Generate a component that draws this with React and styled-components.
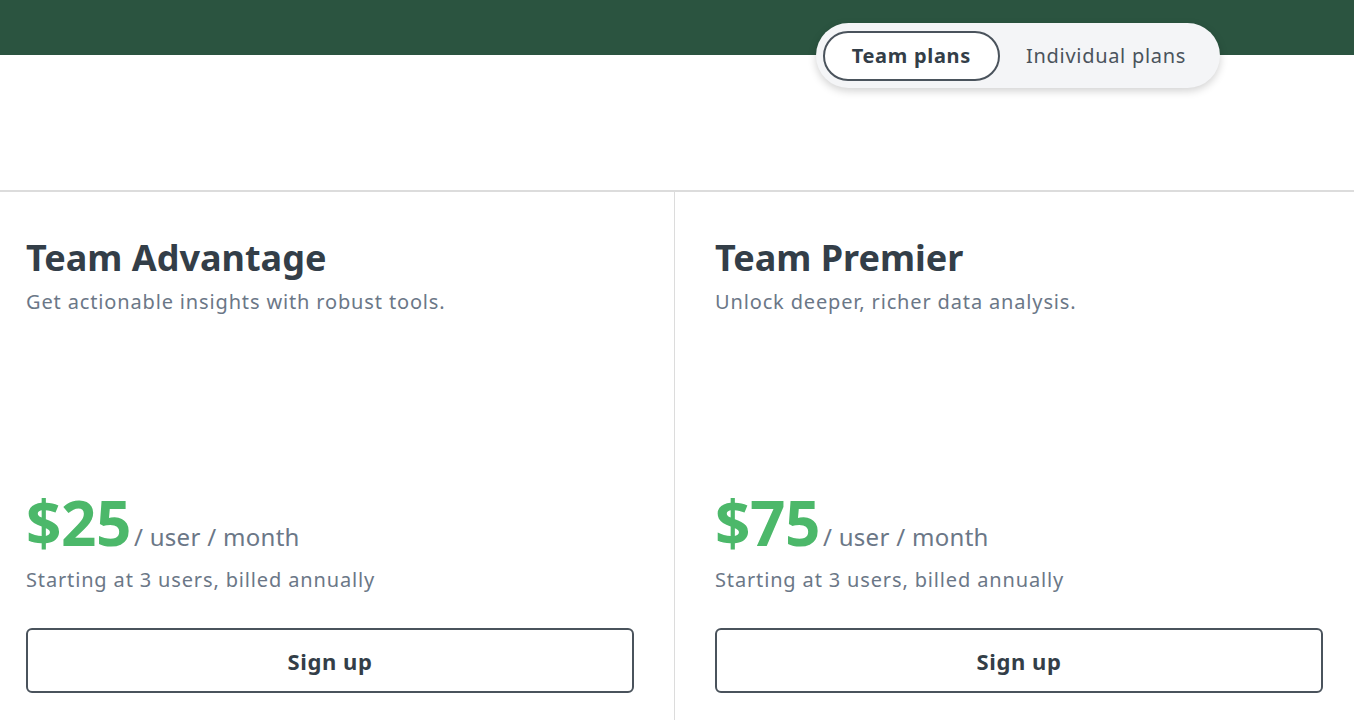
import React from 'react'
import styled, { createGlobalStyle } from 'styled-components'

const GlobalStyle = createGlobalStyle`
  html, body {
    margin: 0;
    padding: 0;
    background: #ffffff;
  }
  body {
    font-family: 'Noto Sans', 'Open Sans', Arial, sans-serif;
    color: #333e48;
    overflow: hidden;
  }
`

const plans = [
  {
    name: 'Team Advantage',
    tagline: 'Get actionable insights with robust tools.',
    price: '$25',
  },
  {
    name: 'Team Premier',
    tagline: 'Unlock deeper, richer data analysis.',
    price: '$75',
  },
]

export default function App() {
  return (
    <>
      <GlobalStyle />
      <Page>
        <Header>
          <Switcher>
            <SwitchButton active>Team plans</SwitchButton>
            <SwitchButton>Individual plans</SwitchButton>
          </Switcher>
        </Header>
        <Spacer />
        <PlanGrid>
          {plans.map((plan, i) => (
            <PlanCard key={plan.name} first={i === 0}>
              <PlanName>{plan.name}</PlanName>
              <Tagline>{plan.tagline}</Tagline>
              <PriceRow>
                <Price>{plan.price}</Price>
                <Per>/ user / month</Per>
              </PriceRow>
              <Billing>Starting at 3 users, billed annually</Billing>
              <SignUp type="button">Sign up</SignUp>
            </PlanCard>
          ))}
        </PlanGrid>
      </Page>
    </>
  )
}

const Page = styled.div`
  width: 1354px;
  height: 720px;
  overflow: hidden;
`

const Header = styled.div`
  height: 55px;
  background: #2b5440;
  display: flex;
  justify-content: flex-end;
  padding-right: 134px;
`

const Switcher = styled.div`
  margin-top: 23px;
  height: 65px;
  box-sizing: border-box;
  display: flex;
  align-items: center;
  padding: 0 8px 0 7px;
  background: #f4f5f7;
  border-radius: 33px;
  box-shadow: 0 3px 8px rgba(0, 0, 0, 0.18);
  position: relative;
  z-index: 1;
`

const SwitchButton = styled.button`
  height: 50px;
  box-sizing: border-box;
  padding: 0 ${({ active }) => (active ? '27px' : '24px')};
  border: ${({ active }) => (active ? '2px solid #4a535c' : '2px solid transparent')};
  border-radius: 25px;
  background: ${({ active }) => (active ? '#ffffff' : 'transparent')};
  font-family: inherit;
  font-size: 20px;
  letter-spacing: 0.7px;
  font-weight: ${({ active }) => (active ? 700 : 400)};
  color: ${({ active }) => (active ? '#333e48' : '#4a535c')};
  cursor: pointer;
`

const Spacer = styled.div`
  height: 135px;
`

const PlanGrid = styled.div`
  display: grid;
  grid-template-columns: 674px 1fr;
  border-top: 2px solid #dcdcdc;
  height: 530px;
`

const PlanCard = styled.div`
  display: flex;
  flex-direction: column;
  padding: 44px ${({ first }) => (first ? '40px 0 26px' : '31px 0 40px')};
  border-left: ${({ first }) => (first ? 'none' : '1px solid #dcdcdc')};
`

const PlanName = styled.h2`
  margin: 0;
  font-size: 36px;
  line-height: 44px;
  font-weight: 700;
  color: #333e48;
`

const Tagline = styled.p`
  margin: 8px 0 0;
  font-size: 20px;
  line-height: 28px;
  letter-spacing: 0.85px;
  color: #6b7787;
`

const PriceRow = styled.div`
  display: flex;
  align-items: baseline;
  margin-top: 173px;
`

const Price = styled.span`
  font-size: 62px;
  line-height: 66px;
  font-weight: 700;
  color: #4cb86a;
  letter-spacing: -0.5px;
`

const Per = styled.span`
  font-size: 24px;
  letter-spacing: 0.3px;
  color: #6b7787;
  margin-left: 3px;
`

const Billing = styled.p`
  margin: 11px 0 0;
  font-size: 20px;
  line-height: 28px;
  letter-spacing: 0.85px;
  color: #6b7787;
`

const SignUp = styled.button`
  margin-top: 34px;
  width: 608px;
  height: 65px;
  border: 2px solid #4a535c;
  border-radius: 6px;
  background: #ffffff;
  font-family: inherit;
  font-size: 22px;
  letter-spacing: 0.6px;
  font-weight: 700;
  color: #333e48;
  cursor: pointer;
`
